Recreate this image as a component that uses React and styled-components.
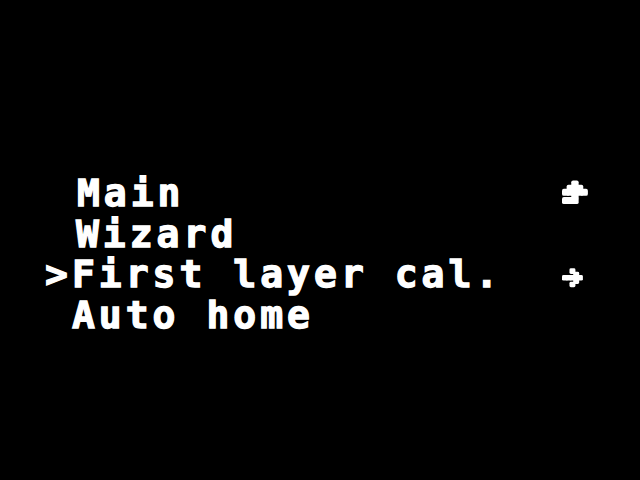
import React from "react";
import styled, { createGlobalStyle } from "styled-components";

// 20x4 character LCD, each cell ~27px wide and 40px tall
const CELL_W = 26.9;
const PX_W = 5;
const PX_H = 4.5;
const BOLD = 3;

const UPLEVEL = [0b00100, 0b01110, 0b11111, 0b00100, 0b11100, 0, 0, 0];
const ARROW_RIGHT = [0, 0b00100, 0b00010, 0b11111, 0b00010, 0b00100, 0, 0];

const GlobalStyle = createGlobalStyle`
  html, body {
    margin: 0;
    padding: 0;
    background: #000;
  }
`;

const Screen = styled.div`
  width: 640px;
  height: 480px;
  background: #000;
  box-sizing: border-box;
  padding: 173px 0 0 45px;
  display: flex;
  flex-direction: column;
`;

const Row = styled.div`
  display: grid;
  grid-template-columns: repeat(20, ${CELL_W}px);
  height: 40.5px;
  margin-left: ${({ shift }) => shift || 0}px;
`;

const Text = styled.span`
  grid-column: 1 / 20;
  font-family: "DejaVu Sans Mono", "Liberation Mono", monospace;
  font-weight: bold;
  font-size: 38px;
  line-height: 40px;
  letter-spacing: ${CELL_W - 22.88}px;
  color: #fff;
  -webkit-text-stroke: 1.3px #fff;
  white-space: pre;
`;

const IconCell = styled.span`
  grid-column: 20;
  display: flex;
  padding: ${({ top }) => top}px 0 0 ${({ left }) => left}px;
`;

const Glyph = ({ rows }) => {
  const w = PX_W * 5 + BOLD;
  const h = PX_H * 8 + BOLD;
  return (
    <svg width={w} height={h} viewBox={`0 0 ${w} ${h}`}>
      {rows.map((bits, r) =>
        [0, 1, 2, 3, 4].map((c) =>
          bits & (1 << (4 - c)) ? (
            <rect
              key={`${r}-${c}`}
              x={c * PX_W}
              y={r * PX_H}
              width={PX_W + BOLD}
              height={PX_H + BOLD}
              rx={2}
              fill="#fff"
            />
          ) : null
        )
      )}
    </svg>
  );
};

const menu = [
  { label: " Main", icon: UPLEVEL, shift: 5, iconTop: 6 },
  { label: " Wizard", shift: 4 },
  { label: ">First layer cal.", icon: ARROW_RIGHT, iconTop: 6 },
  { label: " Auto home" },
];

export default function App() {
  return (
    <>
      <GlobalStyle />
      <Screen>
        {menu.map((item) => (
          <Row key={item.label} shift={item.shift}>
            <Text>{item.label}</Text>
            {item.icon && (
              <IconCell top={item.iconTop} left={6 - (item.shift || 0)}>
                <Glyph rows={item.icon} />
              </IconCell>
            )}
          </Row>
        ))}
      </Screen>
    </>
  );
}
